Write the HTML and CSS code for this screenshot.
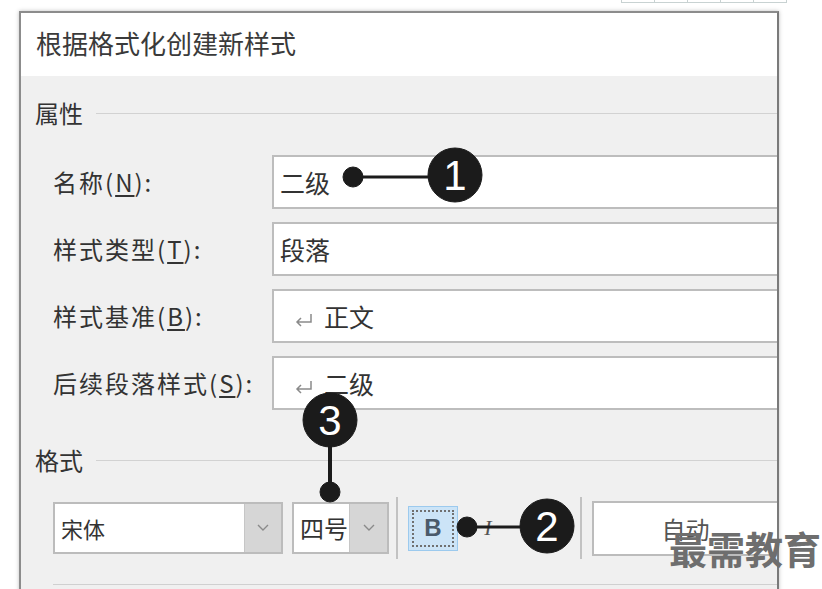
FILE: index.html
```html
<!DOCTYPE html>
<html lang="zh-CN">
<head>
    <meta charset="UTF-8">
    <meta name="viewport" content="width=device-width, initial-scale=1.0">
    <title>根据格式化创建新样式</title>
    <link rel="stylesheet" href="styles.css">
</head>
<body>
    <div class="ruler">
        <span></span><span></span><span></span><span></span><span></span>
    </div>

    <div class="dialog">
        <div class="dialog-title">根据格式化创建新样式</div>
        <div class="dialog-body">
            <div class="group-title"><span>属性</span><i class="rule"></i></div>
            <div class="fields">
                <label>名称(<u>N</u>):</label>
                <div class="field">二级</div>
                <label>样式类型(<u>T</u>):</label>
                <div class="field">段落</div>
                <label>样式基准(<u>B</u>):</label>
                <div class="field"><svg class="para-mark" width="20" height="16" viewBox="0 0 20 16"><path d="M17 2 V10 H3 M7 6 L3 10 L7 14" fill="none" stroke="#8a8a8a" stroke-width="1.5"/></svg>正文</div>
                <label>后续段落样式(<u>S</u>):</label>
                <div class="field"><svg class="para-mark" width="20" height="16" viewBox="0 0 20 16"><path d="M17 2 V10 H3 M7 6 L3 10 L7 14" fill="none" stroke="#8a8a8a" stroke-width="1.5"/></svg>二级</div>
            </div>

            <div class="group-title format"><span>格式</span><i class="rule"></i></div>
            <div class="toolbar">
                <div class="combo font-combo">
                    <span class="combo-text">宋体</span>
                    <span class="combo-btn"><svg width="12" height="8" viewBox="0 0 12 8"><polyline points="1,1 6,6 11,1" fill="none" stroke="#8a8a8a" stroke-width="1.4"/></svg></span>
                </div>
                <div class="combo size-combo">
                    <span class="combo-text">四号</span>
                    <span class="combo-btn"><svg width="12" height="8" viewBox="0 0 12 8"><polyline points="1,1 6,6 11,1" fill="none" stroke="#8a8a8a" stroke-width="1.4"/></svg></span>
                </div>
                <div class="sep"></div>
                <div class="tool bold active"><span class="focus">B</span></div>
                <div class="tool italic">I</div>
                <div class="tool underline">U</div>
                <div class="sep wide"></div>
                <div class="color-combo">自动</div>
            </div>
            <div class="divider"></div>
        </div>
    </div>

    <svg class="callouts" width="822" height="589" viewBox="0 0 822 589">
        <g fill="#1b1b1b" stroke="#1b1b1b">
            <line x1="353" y1="177" x2="440" y2="177" stroke-width="3"/>
            <circle cx="353" cy="177" r="10"/>
            <circle cx="455" cy="175" r="27"/>

            <line x1="330" y1="420" x2="330" y2="492" stroke-width="4"/>
            <circle cx="330" cy="492" r="10"/>
            <circle cx="330" cy="420" r="27"/>

            <line x1="467" y1="527" x2="530" y2="527" stroke-width="3"/>
            <circle cx="467" cy="527" r="10"/>
            <circle cx="547" cy="526" r="27"/>
        </g>
        <g class="num" fill="#fff" text-anchor="middle">
            <text x="455" y="190">1</text>
            <text x="330" y="435">3</text>
            <text x="547" y="541">2</text>
        </g>
    </svg>

    <div class="watermark">最需教育</div>
</body>
</html>
```

FILE: styles.css
```css
html {
    overflow: hidden;
}
body {
    margin: 0;
    background: #fff;
    font-family: "Noto Sans CJK SC", "Noto Sans", sans-serif;
    color: #333;
    position: relative;
}
.ruler {
    display: flex;
    justify-content: flex-end;
    padding-right: 35px;
    height: 3px;
}
.ruler span {
    width: 32px;
    border-left: 1px solid #c8d2d2;
    border-bottom: 1px solid #c8d2d2;
}
.ruler span:last-child {
    border-right: 1px solid #c8d2d2;
}
.dialog {
    margin: 8px 0 0 19px;
    width: 756px;
    border: 2px solid #8c8c8c;
    border-right-color: #7a7a7a;
    box-shadow: 0 0 4px rgba(0, 0, 0, 0.25);
    overflow: hidden;
}
.dialog-title {
    background: #fff;
    height: 63px;
    box-sizing: border-box;
    padding: 12px 0 0 15px;
    font-size: 26px;
    line-height: 36px;
    color: #3a3a3a;
}
.dialog-body {
    background: #f0f0f0;
    padding: 20px 0 40px;
}
.group-title {
    display: flex;
    align-items: center;
    height: 32px;
    margin-left: 14px;
    font-size: 24px;
    color: #333;
}
.group-title .rule {
    flex: 1;
    height: 1px;
    margin: 2px 0 0 13px;
    background: #d2d2d2;
}
.group-title.format {
    margin-top: 33px;
}
.fields {
    display: grid;
    grid-template-columns: 219px 1fr;
    grid-auto-rows: 54px;
    row-gap: 13px;
    margin: 27px 0 0 32px;
}
.fields label {
    font-size: 24px;
    letter-spacing: 2px;
    line-height: 54px;
    color: #333;
}
.fields label u {
    text-underline-offset: 3px;
}
.field {
    background: #fff;
    border: 2px solid #bdbdbd;
    border-right: none;
    padding-left: 6px;
    font-size: 25px;
    line-height: 50px;
    color: #333;
}
.para-mark {
    margin: 0 10px 0 14px;
    vertical-align: -1px;
}
.toolbar {
    display: flex;
    align-items: center;
    height: 62px;
    margin: 22px 0 0 32px;
}
.combo {
    display: flex;
    height: 52px;
    box-sizing: border-box;
    background: #fff;
    border: 2px solid #bcbcbc;
}
.combo-text {
    flex: 1;
    padding-left: 6px;
    line-height: 48px;
    color: #333;
}
.combo-btn {
    display: flex;
    align-items: center;
    justify-content: center;
    background: #d6d6d6;
    border-left: 1px solid #c6c6c6;
}
.font-combo {
    width: 230px;
    font-size: 22px;
}
.font-combo .combo-btn {
    width: 36px;
}
.size-combo {
    width: 97px;
    margin-left: 9px;
    font-size: 24px;
}
.size-combo .combo-btn {
    width: 37px;
}
.sep {
    width: 2px;
    height: 62px;
    margin-left: 7px;
    background: #c2c2c2;
}
.sep.wide {
    margin-left: 12px;
}
.tool {
    width: 50px;
    height: 45px;
    margin-left: 5px;
    box-sizing: border-box;
    display: flex;
    align-items: center;
    justify-content: center;
    color: #555;
}
.tool.active {
    margin-left: 10px;
    padding: 3px;
    background: #cce4f7;
    border: 1px solid #9ccaee;
}
.focus {
    width: 100%;
    height: 100%;
    box-sizing: border-box;
    border: 2px dotted #707070;
    display: flex;
    align-items: center;
    justify-content: center;
    font-family: "Liberation Sans", Arial, sans-serif;
    font-weight: bold;
    font-size: 24px;
    color: #4a5a6b;
}
.italic {
    font-family: "Liberation Serif", serif;
    font-style: italic;
    font-size: 22px;
}
.underline {
    font-family: "Liberation Sans", sans-serif;
    text-decoration: underline;
    font-size: 20px;
}
.color-combo {
    flex: 1;
    height: 55px;
    margin-left: 10px;
    box-sizing: border-box;
    background: #fff;
    border: 2px solid #bcbcbc;
    border-right: none;
    text-align: center;
    font-size: 24px;
    line-height: 51px;
    color: #555;
}
.divider {
    margin: 25px 0 0 32px;
    border-top: 1px solid #d0d0d0;
}
.callouts {
    position: absolute;
    top: 0;
    left: 0;
    pointer-events: none;
}
.callouts .num {
    font-family: "Liberation Sans", Arial, sans-serif;
    font-size: 42px;
}
.watermark {
    position: absolute;
    left: 669px;
    top: 529px;
    font-size: 38px;
    font-weight: bold;
    line-height: 1;
    color: #6e6e6e;
    white-space: nowrap;
}
```
